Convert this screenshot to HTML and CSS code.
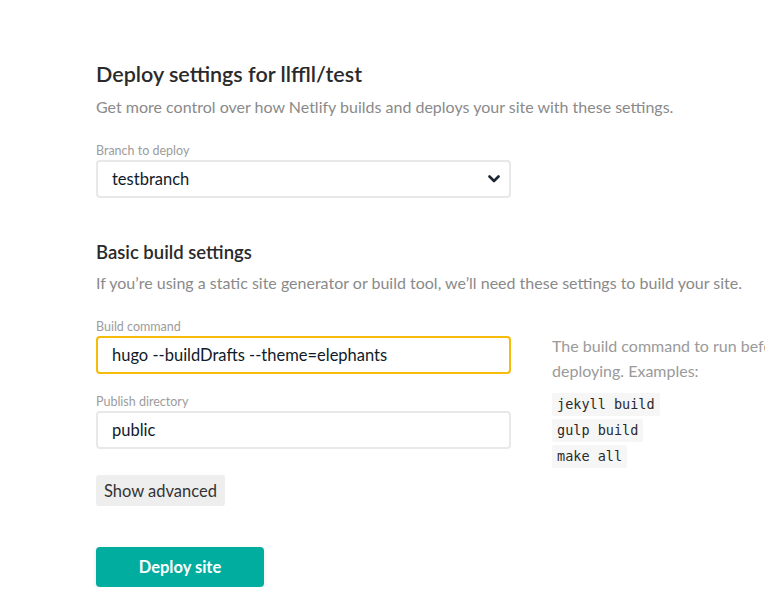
FILE: index.html
```html
<!DOCTYPE html>
<html lang="en">
<head>
<meta charset="utf-8">
<title>Deploy settings</title>
<link rel="stylesheet" href="styles.css">
</head>
<body>
<main class="page">
  <h1 class="title">Deploy settings for llffll/test</h1>
  <p class="lead">Get more control over how Netlify builds and deploys your site with these settings.</p>

  <div class="field field-branch">
    <label class="label">Branch to deploy</label>
    <div class="select">
      <span class="select-value">testbranch</span>
      <svg class="chevron" width="12" height="8" viewBox="0 0 12 8" aria-hidden="true"><path d="M1.5 1.5 L6 6 L10.5 1.5" fill="none" stroke="#1d2733" stroke-width="2.6" stroke-linecap="round" stroke-linejoin="round"/></svg>
    </div>
  </div>

  <h2 class="subtitle">Basic build settings</h2>
  <p class="lead">If you’re using a static site generator or build tool, we’ll need these settings to build your site.</p>

  <div class="build-row">
    <div class="fields">
      <div class="field">
        <label class="label">Build command</label>
        <div class="input input-focus">hugo --buildDrafts --theme=elephants</div>
      </div>
      <div class="field field-publish">
        <label class="label">Publish directory</label>
        <div class="input">public</div>
      </div>
    </div>
    <aside class="help">
      <p class="help-text">The build command to run before deploying. Examples:</p>
      <div class="examples">
        <code class="chip">jekyll build</code>
        <code class="chip">gulp build</code>
        <code class="chip">make all</code>
      </div>
    </aside>
  </div>

  <button class="btn-secondary" type="button">Show advanced</button>
  <div class="actions">
    <button class="btn-primary" type="button">Deploy site</button>
  </div>
</main>
</body>
</html>
```

FILE: styles.css
```css
html, body {
  margin: 0;
  padding: 0;
  background: #ffffff;
  overflow: hidden;
}
body {
  font-family: Lato, "Noto Sans", "Liberation Sans", sans-serif;
  color: #2b2b2b;
}
.page {
  padding: 60px 0 0 96px;
  width: 900px;
}
.title {
  margin: 0;
  font-size: 21.5px;
  line-height: 28px;
  font-weight: 600;
  color: #2a2a2a;
}
.lead {
  margin: 7px 0 0;
  font-size: 16px;
  line-height: 24px;
  color: #8a8a8a;
}
.field-branch {
  margin-top: 24px;
}
.label {
  display: block;
  font-size: 12.5px;
  line-height: 16px;
  color: #9c9c9c;
  margin-bottom: 1px;
}
.select, .input {
  box-sizing: border-box;
  width: 415px;
  height: 38px;
  border: 2px solid #e8e8e8;
  border-radius: 4px;
  display: flex;
  align-items: center;
  padding: 0 14px;
  font-size: 16.5px;
  color: #0f1b2a;
}
.select {
  justify-content: space-between;
  padding-right: 9px;
}
.input-focus {
  border-color: #f7bb0a;
}
.subtitle {
  margin: 42px 0 0;
  font-size: 18.5px;
  line-height: 24px;
  font-weight: 600;
  color: #2a2a2a;
}
.build-row {
  margin-top: 24px;
  display: flex;
  gap: 41px;
  align-items: flex-start;
}
.fields {
  width: 415px;
}
.field-publish {
  margin-top: 20px;
}
.help {
  width: 245px;
  padding-top: 14px;
}
.help-text {
  margin: 0;
  font-size: 16px;
  line-height: 25px;
  color: #9a9a9a;
}
.examples {
  margin-top: 10px;
  display: flex;
  flex-direction: column;
  align-items: flex-start;
  gap: 3px;
}
.chip {
  display: block;
  background: #f6f6f6;
  font-family: "DejaVu Sans Mono", "Liberation Mono", monospace;
  font-size: 13.5px;
  line-height: 23px;
  padding: 0 5px;
  color: #2a2a2a;
  border-radius: 2px;
}
.btn-secondary {
  margin-top: 7px;
  display: block;
  height: 31px;
  padding: 0 8px;
  border: none;
  border-radius: 3px;
  background: #eeeeee;
  font-family: inherit;
  font-size: 16.5px;
  color: #333333;
}
.actions {
  margin-top: 41px;
}
.btn-primary {
  display: block;
  width: 168px;
  height: 40px;
  border: none;
  border-radius: 4px;
  background: #00ad9f;
  color: #ffffff;
  font-family: inherit;
  font-size: 16.5px;
  font-weight: 700;
  box-shadow: 0 2px 4px rgba(0, 0, 0, 0.12);
}
```
